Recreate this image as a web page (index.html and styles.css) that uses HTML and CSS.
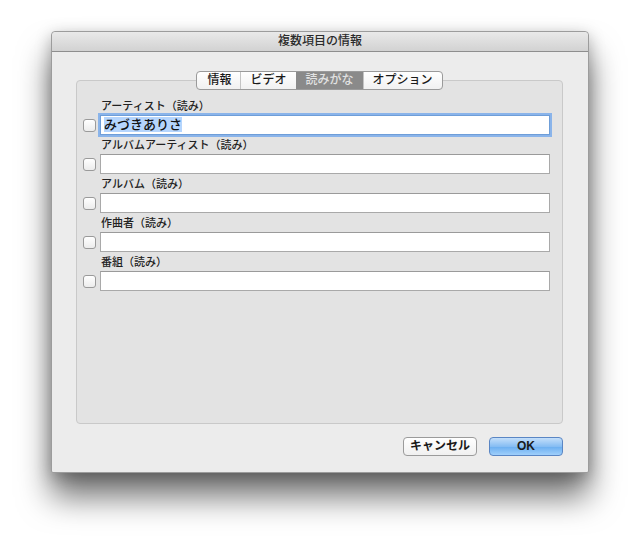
FILE: index.html
```html
<!DOCTYPE html>
<html lang="ja">
<head>
  <meta charset="UTF-8" />
  <title>複数項目の情報</title>
  <link rel="stylesheet" href="styles.css">
</head>
<body>
  <div class="window">
    <div class="titlebar">複数項目の情報</div>
    <div class="content">
      <div class="tabs">
        <div class="tab">情報</div>
        <div class="tab">ビデオ</div>
        <div class="tab selected">読みがな</div>
        <div class="tab">オプション</div>
      </div>
      <div class="tabbox">
        <div class="field">
          <div class="label">アーティスト（読み）</div>
          <div class="row">
            <span class="check"></span>
            <div class="input focused"><span class="sel">みづきありさ</span></div>
          </div>
        </div>
        <div class="field">
          <div class="label">アルバムアーティスト（読み）</div>
          <div class="row">
            <span class="check"></span>
            <div class="input"></div>
          </div>
        </div>
        <div class="field">
          <div class="label">アルバム（読み）</div>
          <div class="row">
            <span class="check"></span>
            <div class="input"></div>
          </div>
        </div>
        <div class="field">
          <div class="label">作曲者（読み）</div>
          <div class="row">
            <span class="check"></span>
            <div class="input"></div>
          </div>
        </div>
        <div class="field">
          <div class="label">番組（読み）</div>
          <div class="row">
            <span class="check"></span>
            <div class="input"></div>
          </div>
        </div>
      </div>
      <div class="buttons">
        <button class="btn">キャンセル</button>
        <button class="btn default">OK</button>
      </div>
    </div>
  </div>
</body>
</html>
```

FILE: styles.css
```css
html, body {
  height: 100%;
}

body {
  margin: 0;
  min-height: 544px;
  background: #fff;
  font-family: "Liberation Sans", "Noto Sans CJK JP", sans-serif;
  color: #1a1a1a;
  overflow: hidden;
}

.window {
  margin: 31px 0 0 51px;
  width: 536px;
  height: 440px;
  background: #ececec;
  border: 1px solid #9c9c9c;
  border-radius: 4px 4px 2px 2px;
  box-shadow: 0 24px 32px rgba(0, 0, 0, 0.55), 0 4px 16px rgba(0, 0, 0, 0.25);
  display: flex;
  flex-direction: column;
}

.titlebar {
  height: 19px;
  line-height: 19px;
  text-align: center;
  font-size: 12px;
  font-weight: 500;
  color: #2a2a2a;
  background: linear-gradient(#e9e9e9, #d2d2d2);
  border-bottom: 1px solid #8e8e8e;
  border-radius: 4px 4px 0 0;
}

.content {
  padding: 19px 25px 0 24px;
  display: flex;
  flex-direction: column;
}

.tabs {
  display: flex;
  align-self: center;
  height: 17px;
  border: 1px solid #9a9a9a;
  border-radius: 4px;
  background: linear-gradient(#ffffff, #f1f1f1);
  overflow: hidden;
  position: relative;
  z-index: 1;
}

.tab {
  font-size: 12px;
  font-weight: 500;
  line-height: 17px;
  padding: 0 9px;
  color: #1a1a1a;
  border-left: 1px solid #c4c4c4;
}

.tab:first-child {
  border-left: none;
  padding-left: 10px;
}

.tab.selected {
  background: #8a8a8a;
  color: #e2e2e2;
  border-left-color: #8a8a8a;
}

.tabbox {
  margin-top: -10px;
  height: 324px;
  background: #e3e3e3;
  border: 1px solid #c9c9c9;
  border-radius: 4px;
  padding: 18px 12px 0 6px;
}

.field {
  margin-bottom: 3px;
}

.label {
  font-size: 11px;
  font-weight: 500;
  line-height: 15px;
  margin-left: 18px;
  margin-bottom: 1px;
  color: #222;
}

.row {
  display: flex;
  align-items: center;
}

.check {
  width: 11px;
  height: 11px;
  border: 1px solid #9a9a9a;
  border-radius: 3px;
  background: linear-gradient(#ffffff, #ececec);
  margin-right: 4px;
}

.input {
  flex: 1;
  height: 18px;
  background: #fff;
  border: 1px solid #a9a9a9;
  border-top-color: #9a9a9a;
}

.input.focused {
  border-color: #6f9ed8;
  box-shadow: 0 0 0 2px #8ab4ea;
  font-size: 13px;
  font-weight: 500;
  line-height: 18px;
  padding-left: 3px;
}

.sel {
  background: #b5d5fd;
  color: #111;
}

.buttons {
  display: flex;
  justify-content: flex-end;
  gap: 12px;
  margin-top: 13px;
}

.btn {
  width: 74px;
  height: 19px;
  padding: 0;
  font-family: "Liberation Sans", "Noto Sans CJK JP", sans-serif;
  font-size: 12px;
  font-weight: 700;
  line-height: 17px;
  color: #1a1a1a;
  border: 1px solid #9b9b9b;
  border-radius: 4px;
  background: linear-gradient(#ffffff, #f0f0f0);
}

.btn.default {
  border-color: #5a86c4;
  background: linear-gradient(#c4dffa, #86bdf3 50%, #6aaef0 51%, #9fcffb);
}
```
